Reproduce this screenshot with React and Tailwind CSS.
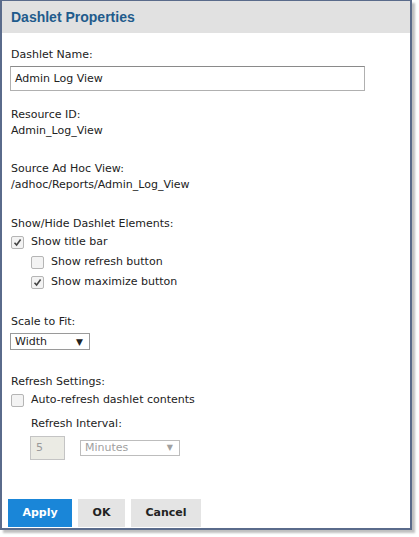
import React from "react";

function Check({ checked, className = "" }) {
  return (
    <span
      className={
        "inline-flex h-[13px] w-[13px] items-center justify-center rounded-[2px] border border-[#b5b5b5] bg-[#f3f3f3] " +
        className
      }
    >
      {checked && (
        <svg width="9" height="9" viewBox="0 0 9 9">
          <path d="M1.5 4.8 L3.6 7 L7.6 1.6" fill="none" stroke="#444" strokeWidth="1.6" />
        </svg>
      )}
    </span>
  );
}

export default function App() {
  return (
    <div className="relative h-[537px] w-[419px] bg-white" style={{ fontFamily: "'DejaVu Sans', Verdana, sans-serif" }}>
      <div className="flex h-[530px] w-[412px] flex-col border-2 border-t-[1px] border-[#5a6b8b] bg-white shadow-[3px_3px_2px_rgba(0,0,0,0.25)]">
        <div className="flex h-[32px] items-center bg-[#e1e1e1] pl-[9px]">
          <span className="text-[14px] font-bold text-[#1f5b8c]" style={{ fontFamily: "'Liberation Sans', Arial, sans-serif" }}>
            Dashlet Properties
          </span>
        </div>
        <div className="flex flex-1 flex-col pl-[9px] pt-[14px] text-[11px] leading-[16px] text-[#222]">
          <div>Dashlet Name:</div>
          <div className="-ml-[1px] mt-[3px] flex h-[25px] w-[355px] items-center border border-[#b0b0b0] border-t-[#8a8a8a] pl-[4px] text-[11px]">
            Admin Log View
          </div>
          <div className="mt-[16px]">Resource ID:</div>
          <div>Admin_Log_View</div>
          <div className="mt-[22px]">Source Ad Hoc View:</div>
          <div>/adhoc/Reports/Admin_Log_View</div>
          <div className="mt-[23px]">Show/Hide Dashlet Elements:</div>
          <div className="flex h-[20px] items-center">
            <Check checked />
            <span className="ml-[7px]">Show title bar</span>
          </div>
          <div className="flex h-[20px] items-center pl-[20px]">
            <Check />
            <span className="ml-[7px]">Show refresh button</span>
          </div>
          <div className="flex h-[20px] items-center pl-[20px]">
            <Check checked />
            <span className="ml-[7px]">Show maximize button</span>
          </div>
          <div className="mt-[22px]">Scale to Fit:</div>
          <div className="-ml-[1px] mt-[3px] flex h-[17px] w-[80px] items-center justify-between border border-[#9a9a9a] pl-[4px] pr-[6px]">
            <span>Width</span>
            <span className="text-[9px]">▼</span>
          </div>
          <div className="mt-[24px]">Refresh Settings:</div>
          <div className="flex h-[20px] items-center">
            <Check />
            <span className="ml-[7px]">Auto-refresh dashlet contents</span>
          </div>
          <div className="mt-[6px] pl-[20px]">Refresh Interval:</div>
          <div className="mt-[4px] flex items-center pl-[19px]">
            <div className="flex h-[24px] w-[35px] items-center border border-[#c4c4c4] bg-[#ebebe4] pl-[5px] text-[#9a9a9a]">5</div>
            <div className="ml-[15px] flex h-[16px] w-[100px] items-center justify-between border border-[#bdbdbd] pl-[4px] pr-[6px] text-[#a0a0a0]">
              <span>Minutes</span>
              <span className="text-[8px]">▼</span>
            </div>
          </div>
          <div className="mt-auto mb-[1px] -ml-[3px] flex gap-[6px] text-[11px] font-bold">
            <div className="flex h-[28px] w-[64px] items-center justify-center bg-[#1a86d8] text-white">Apply</div>
            <div className="flex h-[28px] w-[47px] items-center justify-center bg-[#e4e4e4] text-[#222]">OK</div>
            <div className="flex h-[28px] w-[70px] items-center justify-center bg-[#e4e4e4] text-[#222]">Cancel</div>
          </div>
        </div>
      </div>
    </div>
  );
}
